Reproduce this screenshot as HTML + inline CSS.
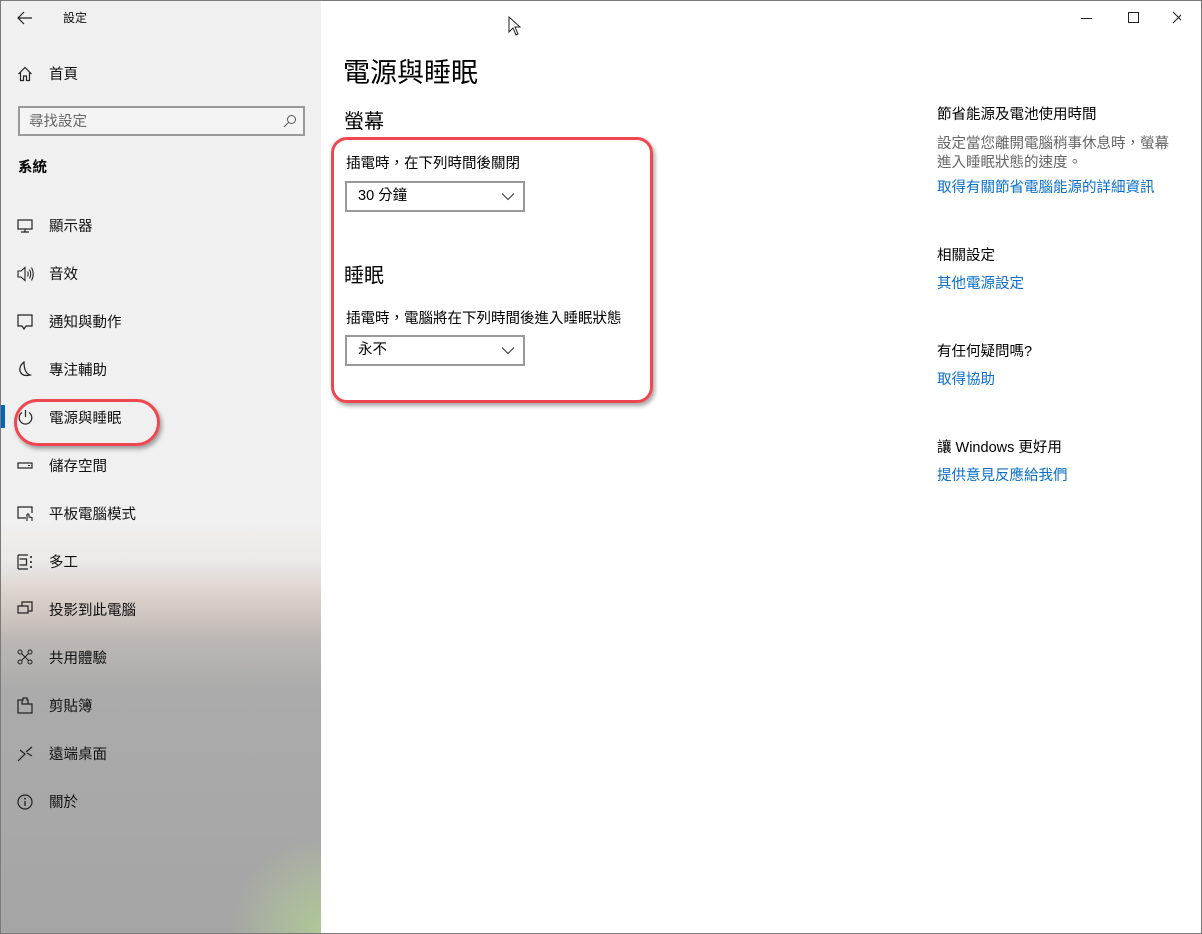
<!DOCTYPE html>
<html><head><meta charset="utf-8"><style>
*{margin:0;padding:0;box-sizing:border-box}
html,body{width:1202px;height:934px;overflow:hidden}
body{font-family:"Liberation Sans","Noto Sans CJK TC",sans-serif;color:#000;background:#fff;position:relative}
.frame{position:absolute;left:0;top:0;width:1202px;height:934px;border:1px solid #7a7a7a;z-index:20;pointer-events:none}
.side{position:absolute;left:0;top:0;width:321px;height:934px;overflow:hidden;
background:radial-gradient(circle at 330px 934px,rgba(178,205,150,.95) 0,rgba(178,205,150,0) 100px),linear-gradient(180deg,#f0f0f0 0,#f0f0f0 520px,#ece9e7 560px,#d9cfc9 600px,#bdb7b4 640px,#ababab 690px,#a5a5a5 934px)}
.t{position:absolute;white-space:nowrap;line-height:1}
.nav{position:absolute;left:49px;font-size:14.5px;color:#111}
.ic{position:absolute;left:17px}
.search{position:absolute;left:18px;top:106px;width:287px;height:30px;border:2px solid #999;background:#f4f4f4}
.dd{position:absolute;left:345px;width:180px;height:31px;border:2px solid #999;background:#fff}
.dd span{position:absolute;left:11px;top:6px;font-size:14.5px;line-height:1}
.dd svg{position:absolute;right:8px;top:9px}
.link{color:#0a6fc9;font-size:14.5px}
.red{position:absolute;border:3px solid #ee4750;box-shadow:2px 3px 4px rgba(0,0,0,.35)}
</style></head><body>
<div class="side"></div>
<div class="frame"></div>
<svg class="ic" style="left:17px;top:11px" width="16" height="14"><path d="M1 7H15M7 1L1 7L7 13" fill="none" stroke="#222" stroke-width="1.2"/></svg>
<div class="t" style="left:63px;top:12px;font-size:12px;color:#111">設定</div>
<svg style="position:absolute;left:1081px;top:10px" width="100" height="16"><path d="M0 8.5H11" stroke="#222"/><rect x="47.5" y="2.5" width="10" height="10" fill="none" stroke="#222"/><path d="M92 2L103 13M103 2L92 13" stroke="#222" stroke-width="1.1"/></svg>
<svg style="position:absolute;left:508px;top:16px" width="14" height="20"><path d="M1 1V16L5 12L8 19L10 18L7 11H12Z" fill="#fff" stroke="#222"/></svg>
<svg class="ic" style="top:66px" width="16" height="16"><path d="M1.5 8L8 1.5L14.5 8M3.5 6V14.5H6.5V10H9.5V14.5H12.5V6" fill="none" stroke="#222" stroke-width="1.2"/></svg>
<div class="t nav" style="top:68px">首頁</div>
<div class="search"><div class="t" style="left:9px;top:7px;font-size:14.5px;color:#666">尋找設定</div>
<svg style="position:absolute;right:6px;top:6px" width="14" height="14"><circle cx="8.5" cy="5.5" r="4" fill="none" stroke="#555"/><path d="M5.5 8.5L1 13" stroke="#555"/></svg></div>
<div class="t" style="left:18px;top:161px;font-size:14.5px;font-weight:bold">系統</div>
<svg class="ic" style="top:219px" width="16" height="14"><rect x="1" y="1" width="14" height="9" fill="none" stroke="#222" stroke-width="1.2"/><path d="M8 10V13M4 13H12" stroke="#222" stroke-width="1.2"/></svg>
<div class="t nav" style="top:220px">顯示器</div>
<svg class="ic" style="top:266px" width="18" height="16"><path d="M1 5H4L8 1.5V14.5L4 11H1Z" fill="none" stroke="#222" stroke-width="1.1"/><path d="M10.5 5.5Q12 8 10.5 10.5M12.5 3.5Q15 8 12.5 12.5M14.5 1.5Q18 8 14.5 14.5" fill="none" stroke="#222" stroke-width="1.1"/></svg>
<div class="t nav" style="top:268px">音效</div>
<svg class="ic" style="top:314px" width="16" height="17"><path d="M1 1H15V12H9L7 15L5 12H1Z" fill="none" stroke="#222" stroke-width="1.2"/></svg>
<div class="t nav" style="top:316px">通知與動作</div>
<svg class="ic" style="top:361px" width="16" height="17"><path d="M7 1Q2 5 3 10Q5 16 13 14Q7 12 7 1Z" fill="none" stroke="#222" stroke-width="1.2"/></svg>
<div class="t nav" style="top:364px">專注輔助</div>
<div style="position:absolute;left:0;top:405px;width:5px;height:23px;background:#0067c0"></div>
<svg class="ic" style="top:409px" width="17" height="17"><path d="M5 3.5A6.3 6.3 0 1 0 12 3.5" fill="none" stroke="#222" stroke-width="1.2"/><path d="M8.5 1V8" stroke="#222" stroke-width="1.2"/></svg>
<div class="t nav" style="top:412px">電源與睡眠</div>
<div class="red" style="left:14px;top:399px;width:146px;height:47px;border-radius:24px"></div>
<svg class="ic" style="top:461px" width="16" height="10"><rect x="1" y="2" width="14" height="5" fill="none" stroke="#222" stroke-width="1.2"/><path d="M11 4.5H13" stroke="#222"/></svg>
<div class="t nav" style="top:460px">儲存空間</div>
<svg class="ic" style="top:506px" width="17" height="17"><path d="M9 12H1V1H15V7" fill="none" stroke="#222" stroke-width="1.2"/><path d="M10 15V8.5Q11 7.5 12 8.5V11L15 11.5V15" fill="none" stroke="#222" stroke-width="1.1"/></svg>
<div class="t nav" style="top:508px">平板電腦模式</div>
<svg class="ic" style="top:554px" width="17" height="16"><path d="M1 1H11M1 15H11M1 1V15M2.5 5H9.5V11H2.5" fill="none" stroke="#222" stroke-width="1.2"/><path d="M14 2V4M14 7V9M14 12V14" stroke="#222" stroke-width="1.6"/></svg>
<div class="t nav" style="top:556px">多工</div>
<svg class="ic" style="top:601px" width="17" height="16"><path d="M5 5V1H15V10H11M1 5H11V12H1Z" fill="none" stroke="#222" stroke-width="1.2"/></svg>
<div class="t nav" style="top:604px">投影到此電腦</div>
<svg class="ic" style="top:649px" width="16" height="16"><circle cx="3" cy="3" r="2" fill="none" stroke="#222"/><circle cx="13" cy="3" r="2" fill="none" stroke="#222"/><circle cx="3" cy="13" r="2" fill="none" stroke="#222"/><circle cx="13" cy="13" r="2" fill="none" stroke="#222"/><path d="M4.5 4.5L11.5 11.5M11.5 4.5L4.5 11.5" stroke="#222"/></svg>
<div class="t nav" style="top:652px">共用體驗</div>
<svg class="ic" style="top:697px" width="16" height="17"><path d="M5 3H1V16H11M9 16H15V7H5V3M5 3H6V1H10V3H11V7" fill="none" stroke="#222" stroke-width="1.2"/></svg>
<div class="t nav" style="top:700px">剪貼簿</div>
<svg class="ic" style="top:746px" width="16" height="16"><path d="M1 15L8 8L3 4M9 6L15 1M10 7L15 10" fill="none" stroke="#222" stroke-width="1.2"/></svg>
<div class="t nav" style="top:748px">遠端桌面</div>
<svg class="ic" style="top:794px" width="16" height="16"><circle cx="8" cy="8" r="7" fill="none" stroke="#222" stroke-width="1.2"/><path d="M8 7V12" stroke="#222" stroke-width="1.3"/><circle cx="8" cy="4.7" r="0.9" fill="#222"/></svg>
<div class="t nav" style="top:796px">關於</div>
<div class="t" style="left:343px;top:60px;font-size:27px">電源與睡眠</div>
<div class="t" style="left:344px;top:112px;font-size:20px">螢幕</div>
<div class="t" style="left:346px;top:157px;font-size:14.5px">插電時，在下列時間後關閉</div>
<div class="dd" style="top:181px"><span>30 分鐘</span><svg width="14" height="9"><path d="M1 1.5L7 7.5L13 1.5" fill="none" stroke="#333"/></svg></div>
<div class="t" style="left:344px;top:266px;font-size:20px">睡眠</div>
<div class="t" style="left:346px;top:312px;font-size:14.5px">插電時，電腦將在下列時間後進入睡眠狀態</div>
<div class="dd" style="top:335px"><span>永不</span><svg width="14" height="9"><path d="M1 1.5L7 7.5L13 1.5" fill="none" stroke="#333"/></svg></div>
<div class="red" style="left:331px;top:137px;width:322px;height:266px;border-radius:16px"></div>
<div class="t" style="left:937px;top:108px;font-size:14.5px">節省能源及電池使用時間</div>
<div class="t" style="left:937px;top:135px;font-size:14.5px;color:#666;line-height:19px">設定當您離開電腦稍事休息時，螢幕<br>進入睡眠狀態的速度。</div>
<div class="t link" style="left:937px;top:181px">取得有關節省電腦能源的詳細資訊</div>
<div class="t" style="left:937px;top:249px;font-size:14.5px">相關設定</div>
<div class="t link" style="left:937px;top:277px">其他電源設定</div>
<div class="t" style="left:937px;top:345px;font-size:14.5px">有任何疑問嗎?</div>
<div class="t link" style="left:937px;top:373px">取得協助</div>
<div class="t" style="left:937px;top:441px;font-size:14.5px">讓 Windows 更好用</div>
<div class="t link" style="left:937px;top:469px">提供意見反應給我們</div>
</body></html>
